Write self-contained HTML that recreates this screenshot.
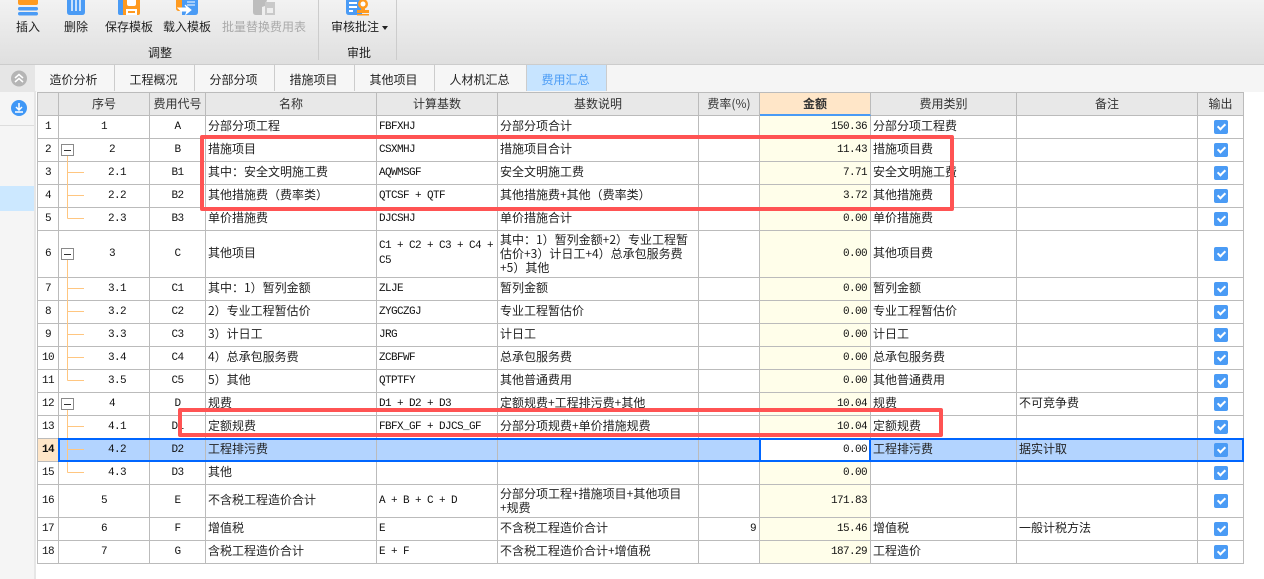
<!DOCTYPE html>
<html lang="zh"><head><meta charset="utf-8"><title>费用汇总</title>
<style>
html,body{margin:0;padding:0;background:#fff}
body{width:1264px;height:579px;position:relative;overflow:hidden;font:12px/14px "WenQuanYi Zen Hei","Noto Sans CJK SC",sans-serif;color:#222}
.a{position:absolute}
.t{position:absolute;white-space:nowrap;transform:translateX(-50%);line-height:14px}
.tab{position:absolute;top:65px;height:26px;line-height:29px;text-align:center;background:#f6f6f6;border-right:1px solid #ccc;box-sizing:border-box;padding-right:2px}
#wrap{position:absolute;left:37px;top:92px;border-left:1px solid #bbb;border-top:1px solid #bbb}
table{border-collapse:separate;border-spacing:0;table-layout:fixed;width:1206px}
td,th{box-sizing:border-box;border-right:1px solid #bbb;border-bottom:1px solid #bbb;font-weight:normal;overflow:hidden;line-height:14px;height:23px;vertical-align:middle;white-space:nowrap}
td{padding:0 1px 2px 2px}
th{background:#e8e8e8;text-align:center;color:#333;padding:0}
.m{font-family:"Liberation Mono",monospace;font-size:11px;letter-spacing:-.6px;padding-bottom:0;color:#111}
.n{text-align:center;padding:0}
.c{text-align:center;padding:0}
.l1{padding-left:16px;padding-right:0;text-align:center}
.l2{padding-left:26px;padding-right:0;text-align:center}
.r{text-align:right;padding-right:3px}
.y{background:#fffeea}
.w{white-space:normal;word-break:break-all}
.f{padding-bottom:0}
.b{display:block;width:14px;height:14px;border-radius:2px;background:#4a9bf5;margin:0 auto;position:relative;top:1px}
.b:after{content:"";position:absolute;left:5px;top:2px;width:3px;height:6px;border:solid #fff;border-width:0 2px 2px 0;transform:rotate(45deg)}
tr.s td{background:#b3d4ff}
tr.s td.y{background:#fff}
tr.s td.rn{background:#ffe6c8;font-weight:bold}
.red{position:absolute;box-sizing:border-box;border:4px solid #ff5353;border-radius:2px}
</style></head><body>
<div class="a" style="left:0;top:0;width:1264px;height:64px;background:linear-gradient(#f2f2f2,#dfdfdf)"></div>
<div class="a" style="left:0;top:64px;width:1264px;height:1px;background:#ccc"></div>
<div class="a" style="left:0;top:65px;width:1264px;height:27px;background:#f5f5f5"></div>
<div class="a" style="left:318px;top:0;width:1px;height:60px;background:#ccc"></div>
<div class="a" style="left:396px;top:0;width:1px;height:60px;background:#ccc"></div>

<svg class="a" style="left:0;top:0" width="400" height="20" viewBox="0 0 400 20">
<path d="M18 0h20v3q0 2-2 2H20q-2 0-2-2z" fill="#ff9a1f"/>
<rect x="18" y="7" width="20" height="3.5" rx="1.7" fill="#4a9bf5"/><rect x="18" y="12" width="20" height="3.5" rx="1.7" fill="#4a9bf5"/>
<path d="M67 0h18v12q0 3-3 3H70q-3 0-3-3z" fill="#4a9bf5"/><path d="M72 0v11M76 0v11M80 0v11" stroke="#fff" stroke-width="1.4"/>
<path d="M118 0h5v15h-3q-2 0-2-2z" fill="#4a9bf5"/>
<path d="M123 0h17v13q0 2-2 2h-15z" fill="#ff9a1f"/><path d="M127 0v4q0 2 2 2h5q2 0 2-2V0zM126 9h11v6h-11z" fill="#fff"/><rect x="128" y="11" width="7" height="2" fill="#ff9a1f"/>
<path d="M176 0h6v11h-3q-3 0-3-3z" fill="#ff9a1f"/><path d="M182 0h16v12q0 3-3 3h-13z" fill="#4a9bf5"/>
<path d="M187 2h8M187 5h8M178 8h9l-2-3 6 5-5 4 1-3h-6z" stroke="#fff" fill="#fff" stroke-width="1"/>
<path d="M253 0h14l-2 6-3 1v8h-6q-3 0-3-3z" fill="#bdbdbd"/><path d="M265 2h10v13h-10z" fill="#c9c9c9"/><rect x="267" y="8" width="6" height="5" fill="#eee"/>
<path d="M346 0h16v15h-13q-3 0-3-3z" fill="#4a9bf5"/><path d="M349 3h8M349 7h8" stroke="#fff" stroke-width="2"/><rect x="349" y="10" width="4" height="2" fill="#fff"/>
<circle cx="363" cy="4" r="5" fill="#ff9a1f"/><circle cx="363" cy="4" r="2.5" fill="#fff"/><rect x="361" y="7" width="4" height="4" fill="#ff9a1f"/><rect x="357" y="10" width="12" height="3" fill="#ff9a1f"/><rect x="357" y="14" width="12" height="1.5" fill="#ff9a1f"/>
</svg>

<div class="t" style="left:28px;top:20px">插入</div>
<div class="t" style="left:76px;top:20px">删除</div>
<div class="t" style="left:129px;top:20px">保存模板</div>
<div class="t" style="left:187px;top:20px">载入模板</div>
<div class="t" style="left:264px;top:20px;color:#aaa">批量替换费用表</div>
<div class="t" style="left:355px;top:20px">审核批注</div>
<div class="a" style="left:382px;top:26px;width:0;height:0;border:3px solid transparent;border-top:4px solid #222;border-bottom:0"></div>
<div class="t" style="left:160px;top:46px">调整</div>
<div class="t" style="left:359px;top:46px">审批</div>

<div class="a" style="left:0;top:65px;width:34px;height:27px;background:#e6e6e6"></div>
<div class="a" style="left:0;top:92px;width:34px;height:487px;background:#f5f5f5"></div>
<div class="a" style="left:34px;top:65px;width:2px;height:514px;background:#e6e6e6"></div>
<div class="a" style="left:0;top:125px;width:34px;height:1px;background:#ddd"></div>
<div class="a" style="left:0;top:186px;width:34px;height:25px;background:#cce8ff"></div>
<svg class="a" style="left:10px;top:70px" width="18" height="17" viewBox="0 0 18 17"><circle cx="9" cy="8.5" r="8" fill="#b5b5b5"/><path d="M5 8l4-3.5L13 8M5 12l4-3.5L13 12" fill="none" stroke="#fff" stroke-width="1.5"/></svg>
<svg class="a" style="left:10px;top:99px" width="18" height="18" viewBox="0 0 18 18"><circle cx="9" cy="9" r="8" fill="#3f97f6"/><path d="M9 4v7M6 8l3 3 3-3M5 13h8" fill="none" stroke="#fff" stroke-width="1.5"/></svg>

<div class="tab" style="left:35px;width:80px">造价分析</div>
<div class="tab" style="left:115px;width:80px">工程概况</div>
<div class="tab" style="left:195px;width:80px">分部分项</div>
<div class="tab" style="left:275px;width:80px">措施项目</div>
<div class="tab" style="left:355px;width:80px">其他项目</div>
<div class="tab" style="left:435px;width:92px">人材机汇总</div>
<div class="tab" style="left:527px;width:80px;background:#c7e4ff;color:#4a9bf5">费用汇总</div>

<div id="wrap"><table>
<colgroup><col style="width:21px"><col style="width:91px"><col style="width:56px"><col style="width:171px"><col style="width:121px"><col style="width:201px"><col style="width:61px"><col style="width:111px"><col style="width:146px"><col style="width:181px"><col style="width:46px"></colgroup>
<tr><th></th><th>序号</th><th>费用代号</th><th>名称</th><th>计算基数</th><th>基数说明</th><th>费率(%)</th><th style="background:#ffe6c8;border-bottom:2px solid #4a9bf5;font-weight:bold">金额</th><th>费用类别</th><th>备注</th><th>输出</th></tr>
<tr><td class="n m rn">1</td><td class="c m">1</td><td class="c m">A</td><td>分部分项工程</td><td class="m">FBFXHJ</td><td>分部分项合计</td><td></td><td class="y r m">150.36</td><td>分部分项工程费</td><td></td><td><i class="b"></i></td></tr>
<tr><td class="n m rn">2</td><td class="l1 m">2</td><td class="c m">B</td><td>措施项目</td><td class="m">CSXMHJ</td><td>措施项目合计</td><td></td><td class="y r m">11.43</td><td>措施项目费</td><td></td><td><i class="b"></i></td></tr>
<tr><td class="n m rn">3</td><td class="l2 m">2.1</td><td class="c m">B1</td><td>其中：安全文明施工费</td><td class="m">AQWMSGF</td><td>安全文明施工费</td><td></td><td class="y r m">7.71</td><td>安全文明施工费</td><td></td><td><i class="b"></i></td></tr>
<tr><td class="n m rn">4</td><td class="l2 m">2.2</td><td class="c m">B2</td><td>其他措施费（费率类）</td><td class="m">QTCSF + QTF</td><td>其他措施费+其他（费率类）</td><td></td><td class="y r m">3.72</td><td>其他措施费</td><td></td><td><i class="b"></i></td></tr>
<tr><td class="n m rn">5</td><td class="l2 m">2.3</td><td class="c m">B3</td><td>单价措施费</td><td class="m">DJCSHJ</td><td>单价措施合计</td><td></td><td class="y r m">0.00</td><td>单价措施费</td><td></td><td><i class="b"></i></td></tr>
<tr><td class="n m rn" style="height:47px">6</td><td class="l1 m">3</td><td class="c m">C</td><td>其他项目</td><td class="m w" style="line-height:15px">C1 + C2 + C3 + C4 + C5</td><td class="f">其中：1）暂列金额+2）专业工程暂<br>估价+3）计日工+4）总承包服务费<br>+5）其他</td><td></td><td class="y r m">0.00</td><td>其他项目费</td><td></td><td><i class="b"></i></td></tr>
<tr><td class="n m rn">7</td><td class="l2 m">3.1</td><td class="c m">C1</td><td>其中：1）暂列金额</td><td class="m">ZLJE</td><td>暂列金额</td><td></td><td class="y r m">0.00</td><td>暂列金额</td><td></td><td><i class="b"></i></td></tr>
<tr><td class="n m rn">8</td><td class="l2 m">3.2</td><td class="c m">C2</td><td>2）专业工程暂估价</td><td class="m">ZYGCZGJ</td><td>专业工程暂估价</td><td></td><td class="y r m">0.00</td><td>专业工程暂估价</td><td></td><td><i class="b"></i></td></tr>
<tr><td class="n m rn">9</td><td class="l2 m">3.3</td><td class="c m">C3</td><td>3）计日工</td><td class="m">JRG</td><td>计日工</td><td></td><td class="y r m">0.00</td><td>计日工</td><td></td><td><i class="b"></i></td></tr>
<tr><td class="n m rn">10</td><td class="l2 m">3.4</td><td class="c m">C4</td><td>4）总承包服务费</td><td class="m">ZCBFWF</td><td>总承包服务费</td><td></td><td class="y r m">0.00</td><td>总承包服务费</td><td></td><td><i class="b"></i></td></tr>
<tr><td class="n m rn">11</td><td class="l2 m">3.5</td><td class="c m">C5</td><td>5）其他</td><td class="m">QTPTFY</td><td>其他普通费用</td><td></td><td class="y r m">0.00</td><td>其他普通费用</td><td></td><td><i class="b"></i></td></tr>
<tr><td class="n m rn">12</td><td class="l1 m">4</td><td class="c m">D</td><td>规费</td><td class="m">D1 + D2 + D3</td><td>定额规费+工程排污费+其他</td><td></td><td class="y r m">10.04</td><td>规费</td><td>不可竞争费</td><td><i class="b"></i></td></tr>
<tr><td class="n m rn">13</td><td class="l2 m">4.1</td><td class="c m">D1</td><td>定额规费</td><td class="m">FBFX_GF + DJCS_GF</td><td>分部分项规费+单价措施规费</td><td></td><td class="y r m">10.04</td><td>定额规费</td><td></td><td><i class="b"></i></td></tr>
<tr class="s"><td class="n m rn">14</td><td class="l2 m">4.2</td><td class="c m">D2</td><td>工程排污费</td><td class="m"></td><td></td><td></td><td class="y r m">0.00</td><td>工程排污费</td><td>据实计取</td><td><i class="b"></i></td></tr>
<tr><td class="n m rn">15</td><td class="l2 m">4.3</td><td class="c m">D3</td><td>其他</td><td class="m"></td><td></td><td></td><td class="y r m">0.00</td><td></td><td></td><td><i class="b"></i></td></tr>
<tr><td class="n m rn" style="height:33px">16</td><td class="c m">5</td><td class="c m">E</td><td>不含税工程造价合计</td><td class="m">A + B + C + D</td><td class="f">分部分项工程+措施项目+其他项目<br>+规费</td><td></td><td class="y r m">171.83</td><td></td><td></td><td><i class="b"></i></td></tr>
<tr><td class="n m rn">17</td><td class="c m">6</td><td class="c m">F</td><td>增值税</td><td class="m">E</td><td>不含税工程造价合计</td><td class="r m">9</td><td class="y r m">15.46</td><td>增值税</td><td>一般计税方法</td><td><i class="b"></i></td></tr>
<tr><td class="n m rn">18</td><td class="c m">7</td><td class="c m">G</td><td>含税工程造价合计</td><td class="m">E + F</td><td>不含税工程造价合计+增值税</td><td></td><td class="y r m">187.29</td><td>工程造价</td><td></td><td><i class="b"></i></td></tr>
</table></div>

<svg class="a" style="left:55px;top:135px" width="40" height="345" viewBox="55 135 40 345" fill="none">
<path d="M67.5 155V218.5M67.5 172.5H84M67.5 195.5H84M67.5 218.5H84" stroke="#ffc680"/>
<path d="M67.5 259V380.5M67.5 288.5H84M67.5 311.5H84M67.5 334.5H84M67.5 357.5H84M67.5 380.5H84" stroke="#ffc680"/>
<path d="M67.5 409V472.5M67.5 426.5H84M67.5 449.5H84M67.5 472.5H84" stroke="#ffc680"/>
<g fill="#fff" stroke="#8a8a8a"><rect x="61.5" y="144.5" width="12" height="11"/><rect x="61.5" y="248.5" width="12" height="11"/><rect x="61.5" y="398.5" width="12" height="11"/></g>
<path d="M64 150.5h7M64 254.5h7M64 404.5h7" stroke="#333"/>
</svg>

<div class="a" style="left:58px;top:438px;width:1186px;height:24px;box-sizing:border-box;border:2px solid #0066ff"></div>
<div class="a" style="left:759px;top:438px;width:2px;height:24px;background:#0066ff"></div>
<div class="a" style="left:869px;top:438px;width:2px;height:24px;background:#0066ff"></div>
<div class="red" style="left:200px;top:135px;width:754px;height:76px"></div>
<div class="red" style="left:178px;top:408px;width:765px;height:29px"></div>
</body></html>
